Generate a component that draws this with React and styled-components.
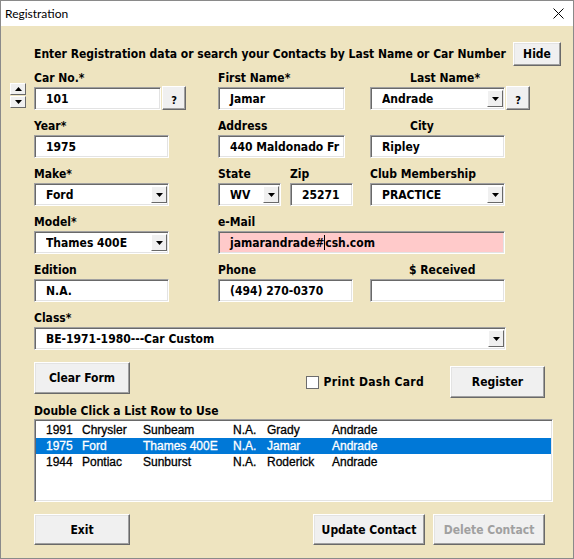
import styled, { createGlobalStyle } from 'styled-components';

const GlobalStyle = createGlobalStyle`
  html, body { margin: 0; padding: 0; background: #ffffff; }
  * { box-sizing: border-box; }
`;

const UI = `"DejaVu Sans Condensed", "DejaVu Sans", sans-serif`;

const rows = [
  { year: '1991', make: 'Chrysler', model: 'Sunbeam', ed: 'N.A.', first: 'Grady', last: 'Andrade' },
  { year: '1975', make: 'Ford', model: 'Thames 400E', ed: 'N.A.', first: 'Jamar', last: 'Andrade', selected: true },
  { year: '1944', make: 'Pontiac', model: 'Sunburst', ed: 'N.A.', first: 'Roderick', last: 'Andrade' },
];

const Arrow = ({ up }) => (
  <svg width="7" height="4" viewBox="0 0 7 4">
    <polygon points={up ? '3.5,0 7,4 0,4' : '0,0 7,0 3.5,4'} fill="#000" />
  </svg>
);

const Combo = ({ width, children }) => (
  <ComboBox $w={width}>
    <BoxText>{children}</BoxText>
    <DropButton>
      <Arrow />
    </DropButton>
  </ComboBox>
);

const Field = ({ label, indent, children }) => (
  <Cell>
    <Label $indent={indent}>{label}</Label>
    <InputLine>{children}</InputLine>
  </Cell>
);

export default function App() {
  return (
    <>
      <GlobalStyle />
      <Window>
        <TitleBar>
          <Title>Registration</Title>
          <CloseIcon width="11" height="11" viewBox="0 0 11 11">
            <path d="M0.5 0.5 L10.5 10.5 M10.5 0.5 L0.5 10.5" stroke="#000" strokeWidth="1" />
          </CloseIcon>
        </TitleBar>
        <Body>
          <Header>
            <Heading>Enter Registration data or search your Contacts by Last Name or Car Number</Heading>
            <Button $w={48} $h={24}>Hide</Button>
          </Header>

          <Fields>
            <FieldRow>
              <Field label="Car No.*">
                <Spinner>
                  <SpinButton><Arrow up /></SpinButton>
                  <SpinButton><Arrow /></SpinButton>
                </Spinner>
                <TextBox $w={127}>101</TextBox>
                <QButton>?</QButton>
              </Field>
              <Field label="First Name*">
                <TextBox $w={127}>Jamar</TextBox>
              </Field>
              <Field label="Last Name*" indent={40}>
                <Combo width={135}>Andrade</Combo>
                <QButton>?</QButton>
              </Field>
            </FieldRow>

            <FieldRow>
              <Field label="Year*">
                <TextBox $w={135}>1975</TextBox>
              </Field>
              <Field label="Address">
                <TextBox $w={127}>440 Maldonado Fr</TextBox>
              </Field>
              <Field label="City" indent={40}>
                <TextBox $w={135}>Ripley</TextBox>
              </Field>
            </FieldRow>

            <FieldRow>
              <Field label="Make*">
                <Combo width={135}>Ford</Combo>
              </Field>
              <Pair>
                <Field label="State">
                  <Combo width={63}>WV</Combo>
                </Field>
                <Field label="Zip">
                  <TextBox $w={63}>25271</TextBox>
                </Field>
              </Pair>
              <Field label="Club Membership">
                <Combo width={135}>PRACTICE</Combo>
              </Field>
            </FieldRow>

            <FieldRow>
              <Field label="Model*">
                <Combo width={135}>Thames 400E</Combo>
              </Field>
              <Wide>
                <Field label="e-Mail">
                  <TextBox $w={287} $bg="#ffcaca">
                    jamarandrade#<Caret />csh.com
                  </TextBox>
                </Field>
              </Wide>
            </FieldRow>

            <FieldRow>
              <Field label="Edition">
                <TextBox $w={135}>N.A.</TextBox>
              </Field>
              <Field label="Phone">
                <TextBox $w={135}>(494) 270-0370</TextBox>
              </Field>
              <Field label="$ Received" indent={39}>
                <TextBox $w={135} />
              </Field>
            </FieldRow>

            <ClassRow>
              <Field label="Class*">
                <Combo width={472}>BE-1971-1980---Car Custom</Combo>
              </Field>
            </ClassRow>
          </Fields>

          <ActionRow>
            <Button $w={96} $h={32}>Clear Form</Button>
            <RightGroup>
              <CheckLabel>
                <CheckBox />
                Print Dash Card
              </CheckLabel>
              <Button $w={95} $h={32}>Register</Button>
            </RightGroup>
          </ActionRow>

          <ListLabel>Double Click a List Row to Use</ListLabel>
          <ListBox>
            {rows.map((r) => (
              <ListRow key={r.first} $selected={r.selected}>
                <span>{r.year}</span>
                <span>{r.make}</span>
                <span>{r.model}</span>
                <span>{r.ed}</span>
                <span>{r.first}</span>
                <span>{r.last}</span>
              </ListRow>
            ))}
          </ListBox>

          <FooterRow>
            <Button $w={96} $h={31}>Exit</Button>
            <FooterRight>
              <Button $w={112} $h={31}>Update Contact</Button>
              <Button $w={112} $h={31} disabled>Delete Contact</Button>
            </FooterRight>
          </FooterRow>
        </Body>
      </Window>
    </>
  );
}

const Window = styled.div`
  width: 574px;
  height: 559px;
  border: 1px solid #8a8a8a;
  display: flex;
  flex-direction: column;
  font-family: ${UI};
  font-stretch: condensed;
  font-weight: bold;
  font-size: 12px;
  color: #000;
`;

const TitleBar = styled.div`
  height: 25px;
  background: #fff;
  display: flex;
  align-items: center;
  padding: 0 9px 0 4px;
`;

const Title = styled.span`
  font-family: Lato, "Noto Sans", sans-serif;
  font-weight: normal;
  font-stretch: normal;
  font-size: 12px;
  color: #000;
`;

const CloseIcon = styled.svg`
  margin-left: auto;
`;

const Body = styled.div`
  flex: 1;
  background: #eee4c0;
  display: flex;
  flex-direction: column;
  padding-top: 16px;
`;

const Header = styled.div`
  display: flex;
  align-items: center;
  padding: 0 12px 0 33px;
`;

const Heading = styled.span`
  white-space: nowrap;
`;

const Button = styled.button`
  width: ${(p) => p.$w}px;
  height: ${(p) => p.$h}px;
  background: #f0f0f0;
  border: 1px solid;
  border-color: #ffffff #696969 #696969 #ffffff;
  box-shadow: inset -1px -1px 0 #a0a0a0, inset 1px 1px 0 #e3e3e3;
  font: inherit;
  color: #000;
  padding: 0;
  white-space: nowrap;
  &:disabled {
    color: #a0a0a0;
  }
  ${Header} & {
    margin-left: auto;
  }
`;

const Fields = styled.div`
  display: flex;
  flex-direction: column;
  gap: 9px;
  padding-left: 33px;
  margin-top: 5px;
`;

const FieldRow = styled.div`
  display: grid;
  grid-template-columns: 184px 152px 1fr;
  align-items: end;
`;

const ClassRow = styled.div`
  display: flex;
`;

const Cell = styled.div`
  display: flex;
  flex-direction: column;
`;

const Pair = styled.div`
  display: flex;
  gap: 9px;
`;

const Wide = styled.div`
  grid-column: 2 / 4;
`;

const Label = styled.div`
  height: 14px;
  line-height: 14px;
  margin-bottom: 2px;
  padding-left: ${(p) => p.$indent || 0}px;
  white-space: nowrap;
`;

const InputLine = styled.div`
  display: flex;
  align-items: flex-start;
`;

const sunken = `
  background: #fff;
  border: 1px solid;
  border-color: #a0a0a0 #ffffff #ffffff #a0a0a0;
  box-shadow: inset 1px 1px 0 #696969, inset -1px -1px 0 #e3e3e3;
`;

const TextBox = styled.div`
  ${sunken}
  background: ${(p) => p.$bg || '#fff'};
  width: ${(p) => p.$w}px;
  height: 23px;
  display: flex;
  align-items: center;
  padding-left: 11px;
  overflow: hidden;
  white-space: nowrap;
`;

const Caret = styled.span`
  display: inline-block;
  width: 1px;
  height: 15px;
  background: #000;
`;

const ComboBox = styled.div`
  ${sunken}
  width: ${(p) => p.$w}px;
  height: 23px;
  display: flex;
  align-items: stretch;
  padding: 2px 1px 2px 11px;
`;

const BoxText = styled.span`
  flex: 1;
  display: flex;
  align-items: center;
  white-space: nowrap;
  overflow: hidden;
`;

const DropButton = styled.span`
  width: 16px;
  background: #f0f0f0;
  border: 1px solid;
  border-color: #ffffff #696969 #696969 #ffffff;
  display: flex;
  align-items: center;
  justify-content: center;
`;

const QButton = styled.button`
  width: 24px;
  height: 24px;
  margin-left: 1px;
  margin-top: -1px;
  background: #f0f0f0;
  border: 1px solid;
  border-color: #ffffff #696969 #696969 #ffffff;
  box-shadow: inset -1px -1px 0 #a0a0a0;
  font: inherit;
  font-size: 11px;
  padding: 5px 0 0;
  color: #000;
`;

const Spinner = styled.div`
  display: flex;
  flex-direction: column;
  margin: -4px 8px 0 -24px;
`;

const SpinButton = styled.span`
  width: 16px;
  height: 12px;
  margin-bottom: 1px;
  background: #f0f0f0;
  border: 1px solid;
  border-color: #ffffff #696969 #696969 #ffffff;
  display: flex;
  align-items: center;
  justify-content: center;
`;

const ActionRow = styled.div`
  display: flex;
  justify-content: space-between;
  align-items: flex-start;
  padding: 0 28px 0 33px;
  margin-top: 12px;
`;

const RightGroup = styled.div`
  display: flex;
  align-items: center;
  gap: 26px;
  margin-top: 4px;
`;

const CheckLabel = styled.label`
  display: flex;
  align-items: center;
  gap: 5px;
  letter-spacing: 0.3px;
`;

const CheckBox = styled.span`
  width: 13px;
  height: 13px;
  background: #fff;
  border: 1px solid #6d6d6d;
`;

const ListLabel = styled.div`
  padding-left: 33px;
  margin-top: 6px;
  height: 14px;
  line-height: 14px;
  margin-bottom: 1px;
`;

const ListBox = styled.div`
  ${sunken}
  margin-left: 33px;
  width: 519px;
  height: 83px;
  padding: 2px 1px;
  font-family: "Liberation Sans", Arial, sans-serif;
  font-weight: normal;
  font-stretch: normal;
  font-size: 12px;
  -webkit-text-stroke: 0.3px currentColor;
`;

const ListRow = styled.div`
  display: grid;
  grid-template-columns: 36px 61px 90px 34px 65px 1fr;
  height: 16px;
  line-height: 16px;
  padding-left: 10px;
  background: ${(p) => (p.$selected ? '#0078d7' : 'transparent')};
  color: ${(p) => (p.$selected ? '#fff' : '#000')};
  white-space: nowrap;
`;

const FooterRow = styled.div`
  display: flex;
  justify-content: space-between;
  padding: 0 28px 0 33px;
  margin-top: 12px;
`;

const FooterRight = styled.div`
  display: flex;
  gap: 8px;
`;
